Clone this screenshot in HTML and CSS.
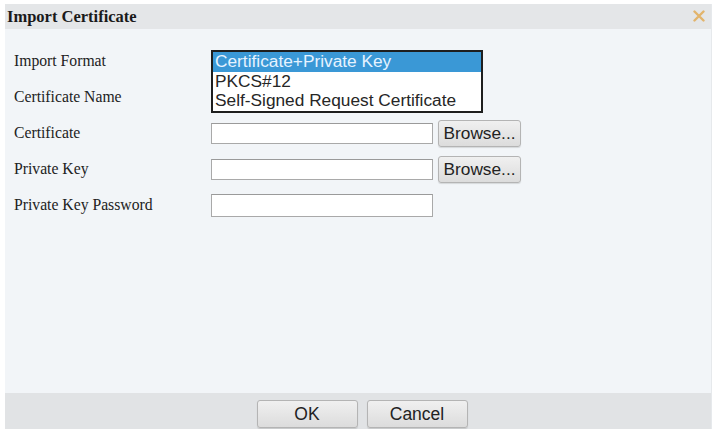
FILE: index.html
```html
<!DOCTYPE html>
<html>
<head>
<meta charset="utf-8">
<link rel="stylesheet" href="styles.css">
</head>
<body>
<div class="dialog">
  <div class="titlebar">
    <span class="title">Import Certificate</span>
    <svg class="close" width="12" height="12" viewBox="0 0 12 12"><path d="M1.5 1.5 L10.5 10.5 M10.5 1.5 L1.5 10.5" stroke="#e2b46c" stroke-width="2.4" stroke-linecap="round"/></svg>
  </div>
  <div class="content">
    <div class="row">
      <div class="label">Import Format</div>
      <div class="control">
        <div class="listbox">
          <div class="opt sel">Certificate+Private Key</div>
          <div class="opt">PKCS#12</div>
          <div class="opt">Self-Signed Request Certificate</div>
        </div>
      </div>
    </div>
    <div class="row">
      <div class="label">Certificate Name</div>
      <div class="control"></div>
    </div>
    <div class="row">
      <div class="label">Certificate</div>
      <div class="control"><div class="input"></div><button class="btn browse">Browse...</button></div>
    </div>
    <div class="row">
      <div class="label">Private Key</div>
      <div class="control"><div class="input"></div><button class="btn browse">Browse...</button></div>
    </div>
    <div class="row">
      <div class="label">Private Key Password</div>
      <div class="control"><div class="input pw"></div></div>
    </div>
  </div>
  <div class="footer">
    <button class="btn fbtn">OK</button>
    <button class="btn fbtn">Cancel</button>
  </div>
</div>
</body>
</html>
```
FILE: styles.css
```css
html, body {
  margin: 0;
  padding: 0;
  background: #ffffff;
}
body {
  width: 718px;
  height: 429px;
  overflow: hidden;
}
.dialog {
  width: 707px;
  height: 425px;
  margin: 4px 0 0 5px;
  display: flex;
  flex-direction: column;
  background: #f2f5f8;
  border-right: 1px solid #e6e9ec;
  box-sizing: border-box;
}
.titlebar {
  height: 25px;
  background: #e4e6e8;
  display: flex;
  align-items: center;
  justify-content: space-between;
  padding: 0 6px 0 2px;
}
.title {
  font-family: "Liberation Serif", "Times New Roman", serif;
  font-weight: bold;
  font-size: 16.5px;
  color: #1a1a1a;
}
.close {
  margin-top: -2px;
}
.content {
  flex: 1;
  padding: 14px 0 0 9px;
  display: flex;
  flex-direction: column;
}
.row {
  height: 36px;
  display: flex;
  align-items: center;
}
.label {
  width: 197px;
  font-family: "Liberation Serif", "Times New Roman", serif;
  font-size: 15.7px;
  color: #222;
}
.control {
  position: relative;
  display: flex;
  align-items: center;
  gap: 5px;
  height: 100%;
}
.listbox {
  position: absolute;
  left: 0;
  top: 7px;
  width: 272px;
  height: 63px;
  box-sizing: border-box;
  border: 2px solid #1e1e1e;
  background: #ffffff;
  font-family: "Liberation Sans", Arial, sans-serif;
  font-size: 17.3px;
  color: #262626;
  z-index: 2;
}
.opt {
  height: 19.6px;
  line-height: 19px;
  padding-left: 2px;
  white-space: nowrap;
}
.opt.sel {
  background: #3a98d6;
  color: #e6f3ff;
}
.input {
  width: 222px;
  height: 21px;
  box-sizing: border-box;
  border: 1px solid #a9a9a9;
  border-top-color: #9a9a9a;
  background: #ffffff;
}
.input.pw {
  height: 23px;
}
.btn {
  font-family: "Liberation Sans", Arial, sans-serif;
  font-size: 17.5px;
  color: #222;
  background: linear-gradient(#f0f0f0, #dcdcdc);
  border: 1px solid #b4b4b4;
  border-radius: 3px;
  padding: 0;
  box-shadow: 0 1px 1px rgba(0,0,0,0.12);
}
.browse {
  width: 83px;
  height: 27px;
  font-size: 17.3px;
}
.footer {
  height: 36px;
  background: #e1e3e5;
  display: flex;
  justify-content: center;
  align-items: flex-end;
  gap: 9px;
  padding-left: 8px;
}
.fbtn {
  width: 101px;
  height: 28px;
  margin-bottom: 1px;
}
```
